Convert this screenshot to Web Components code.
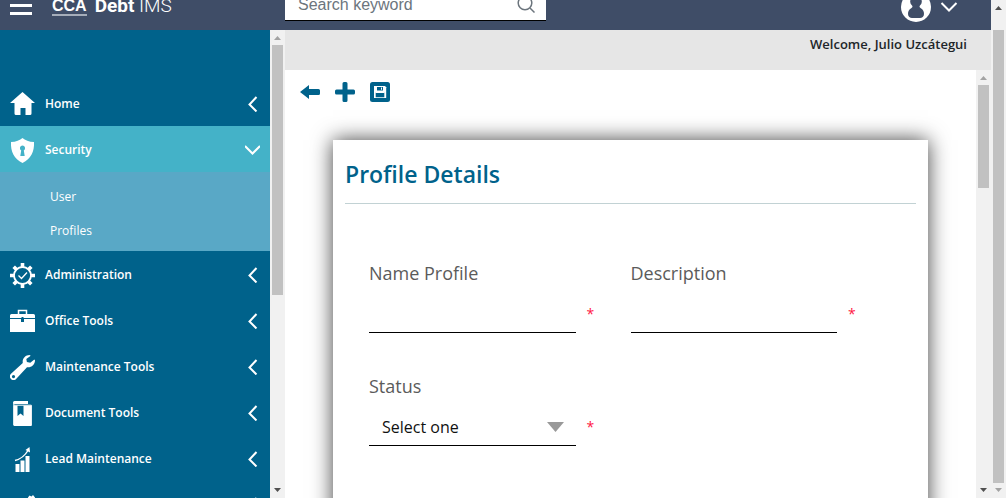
<!DOCTYPE html>
<html lang="en">
<head>
<meta charset="utf-8">
<title>Debt IMS</title>
<style>
  html, body { margin: 0; height: 100%; overflow: hidden; }
  body { font-family: "Open Sans", sans-serif; background: #fff; }
</style>
</head>
<body>
<ims-app></ims-app>
<script>
const ICONS = {
  home: '<path d="M12.500 0L25 11h-3.500v10.500a1.500 1.500 0 0 1-1.500 1.500h-4.500v-7h-5v7H6a1.500 1.500 0 0 1-1.500-1.500V11H0z"/>',
  shield: '<path fill-rule="evenodd" d="M12.500 0C15 2.300 19 4 24 4c.5 9.500-3 17-11.500 21C4 21 .5 13.500 1 4c5 0 9-1.700 11.500-4zM12.500 7.500a2.700 2.700 0 0 0-1.300 5l-.9 5.500h4.400l-.9-5.500a2.700 2.700 0 0 0-1.300-5z"/>',
  gear: '<g fill="none" stroke="#fff"><circle cx="12.500" cy="12.500" r="8.500" stroke-width="1.800"/><path d="M8.500 12.500l3 3 5.500-6" stroke-width="1.300"/><g stroke-width="3.600"><path d="M12.500 0v4M12.500 21v4M0 12.500h4M21 12.500h4M3.700 3.700l2.800 2.800M18.500 18.500l2.800 2.800M3.700 21.300l2.800-2.800M18.500 6.500l2.800-2.800"/></g></g>',
  briefcase: '<path d="M8.500 5V1.500h8V5" fill="none" stroke="#fff" stroke-width="1.500"/><path d="M1.500 5h22A1.500 1.500 0 0 1 25 6.500V9H0V6.500A1.500 1.500 0 0 1 1.500 5zM0 10h11v3h3v-3h11v13H0z"/><path d="M11.500 8h2v4h-2z" fill="#00628b"/>',
  wrench: '<path fill-rule="evenodd" d="M19.500 0c-4 0-7.500 3.500-6.700 8L1 18.800a3.600 3.600 0 0 0 5.100 5.100L17 12.300c4.500.5 8-2.800 8-7.100l-.7-.8-4 3.300-3.400-.6-.6-3.200L20.700.7zM3.500 20a1.600 1.600 0 1 1 0 3.200 1.600 1.600 0 0 1 0-3.200z"/>',
  book: '<path d="M4.500 0H18v3H4.500a1.500 1.500 0 0 1 0-3z"/><path d="M3.800 1.500v22.700h17.500V4.200H4" fill="none" stroke="#fff" stroke-width="1"/><path d="M3.500 4.500h4V15l3-2.500 3 2.500V4.500h8V25H5a1.500 1.500 0 0 1-1.500-1.500z"/>',
  chart: '<path d="M5.500 17h4v8h-4zM10.500 13.500h4V25h-4zM15.500 9h4v16h-4z"/><path d="M5 13.500C11 12 15 8.500 18 3.500" fill="none" stroke="#fff" stroke-width="1.400"/><path d="M19.500 0l.5 5.500-4.500-2.500z"/>',
  tools: '<path d="M18 4.500l1.500-2 2 1 1.500-1.500 2 2.500 0 7H17z"/><path d="M5 12l14 1v10H5z"/>'
};

const define = (name, html, setup) => {
  const template = document.createElement('template');
  template.innerHTML = html;
  customElements.define(name, class extends HTMLElement {
    constructor() {
      super();
      this.attachShadow({ mode: 'open' }).append(template.content.cloneNode(true));
    }
    connectedCallback() { if (setup) setup(this, this.shadowRoot); }
  });
};

/* Vertical scroll bar: --before is the space above the thumb, --thumb its length. */
define('ims-scrollbar', `
  <style>
    :host { display: grid; grid-template-rows: 15px 1fr 15px; width: 15px; background: #f1f1f1; }
    svg { width: 15px; height: 15px; display: block; }
    .track { display: grid; grid-template-rows: var(--before, 0%) var(--thumb, 50%); padding: 0 2px; min-height: 0; }
    i { grid-row: 2; background: #c1c1c1; }
    .up { fill: var(--up, #a3a3a3); }
    .down { fill: var(--down, #505050); }
  </style>
  <svg class="up" viewBox="0 0 15 15"><path d="M4 10l3.500-4 3.500 4z"/></svg>
  <div class="track"><i></i></div>
  <svg class="down" viewBox="0 0 15 15"><path d="M4 5l3.500 4L11 5z"/></svg>`);

define('ims-header', `
  <style>
    :host { display: flex; align-items: flex-end; height: 60px; margin-top: -30px; background: #3f4d67; color: #fff; box-sizing: border-box; }
    button { border: 0; background: none; padding: 0; display: block; }
    svg { display: block; }
    .side { width: 285px; box-sizing: border-box; padding: 0 0 14px 10px; display: flex; align-items: flex-end; flex: none; }
    .brand { display: flex; align-items: flex-end; margin-left: 20px; font: 300 19px/20px Roboto, sans-serif; color: #fff; text-decoration: none; }
    .brand b { font-weight: 700; }
    .mark { font: bold 16px/16px "Liberation Sans", sans-serif; border-bottom: 2px solid #a5adba; margin-right: 8px; }
    form { width: 261px; height: 41px; margin: 0 0 9px; display: flex; align-items: center; background: #fff; border-bottom: 1px solid #000; box-sizing: border-box; flex: none; }
    input { flex: 1; min-width: 0; border: 0; outline: 0; background: none; padding: 10px 0 0 13px; font: 16px/24px "Liberation Sans", sans-serif; }
    input::placeholder { color: #6c757d; opacity: 1; }
    form button { margin: 8px 11px 0 0; }
    .user { margin: 0 33px 8px auto; display: flex; align-items: center; gap: 9px; }
  </style>
  <div class="side">
    <button aria-label="Toggle menu"><svg width="22" height="20" viewBox="0 0 22 20" stroke="#fff" stroke-width="3"><path d="M0 1.500h22M0 9.500h22M0 17.500h22"/></svg></button>
    <a class="brand" href="#"><span class="mark">CCA</span><b>Debt</b>&nbsp;<span>IMS</span></a>
  </div>
  <form>
    <input type="search" placeholder="Search keyword" aria-label="Search keyword">
    <button type="button" aria-label="Search"><svg width="18" height="18" viewBox="0 0 18 18" fill="none" stroke="#6c757d" stroke-width="1.500"><circle cx="8" cy="8" r="6.800"/><path d="M13 13l4.500 4.500"/></svg></button>
  </form>
  <button class="user" aria-label="Account menu">
    <svg width="30" height="30" viewBox="0 0 30 30"><circle cx="15" cy="15" r="15" fill="#fff"/><path fill="#3f4d67" d="M15 4a5.500 5.500 0 0 1 4 9.500c-.8 1-.6 1.600.5 2.500 2.800 1.600 3.500 3.500 3.500 6 0 2.700-2 4-4 4h-8c-2 0-4-1.300-4-4 0-2.500.7-4.400 3.500-6 1.100-.9 1.300-1.500.5-2.500A5.500 5.500 0 0 1 15 4z"/></svg>
    <svg width="18" height="10" viewBox="0 0 18 10" fill="none" stroke="#fff" stroke-width="2"><path d="M1.500 1L9 8.500 16.500 1"/></svg>
  </button>`);

define('nav-item', `
  <style>
    :host { display: block; }
    .row { display: flex; align-items: center; height: 46px; padding: 2px 10px 0; color: #fff; text-decoration: none; font-weight: 600; font-size: 12px; line-height: 16px; box-sizing: border-box; }
    svg { display: block; flex: none; fill: #fff; }
    span { flex: 1; margin-left: 10px; }
    .chev { fill: none; stroke: #fff; stroke-width: 2; }
    .open { display: none; }
    :host([open]) .row { background: #44b2c8; }
    :host([open]) .open { display: block; }
    :host([open]) .shut { display: none; }
    .sub { display: none; }
    :host([open]) .sub { display: flex; flex-direction: column; background: #59a8c6; padding: 8px 0 3px; }
  </style>
  <a class="row" href="#"><svg class="icon" width="25" height="25" viewBox="0 0 25 25"></svg><span></span>
    <svg class="chev shut" width="15" height="16" viewBox="0 0 15 16"><path d="M11.500 1L4.500 8.500l7 7"/></svg>
    <svg class="chev open" width="15" height="10" viewBox="0 0 15 10"><path d="M0 1l7.500 7.500L15 1"/></svg>
  </a>
  <div class="sub"><slot></slot></div>`,
  (el, root) => {
    root.querySelector('.icon').innerHTML = ICONS[el.getAttribute('icon')];
    root.querySelector('span').textContent = el.getAttribute('label');
  });

define('nav-link', `
  <style>
    :host { display: block; }
    a { display: block; padding: 0 50px; color: #fff; font-size: 12px; line-height: 34px; text-decoration: none; }
  </style>
  <a href="#"><slot></slot></a>`);

define('ims-sidebar', `
  <style>
    :host { display: flex; background: #00628b; min-height: 0; overflow: hidden; }
    nav { flex: 1; padding-top: 50px; overflow: hidden; }
    ims-scrollbar { --thumb: 57%; }
  </style>
  <nav>
    <nav-item icon="home" label="Home"></nav-item>
    <nav-item icon="shield" label="Security" open><nav-link>User</nav-link><nav-link>Profiles</nav-link></nav-item>
    <nav-item icon="gear" label="Administration"></nav-item>
    <nav-item icon="briefcase" label="Office Tools"></nav-item>
    <nav-item icon="wrench" label="Maintenance Tools"></nav-item>
    <nav-item icon="book" label="Document Tools"></nav-item>
    <nav-item icon="chart" label="Lead Maintenance"></nav-item>
    <nav-item icon="tools" label=""></nav-item>
  </nav>
  <ims-scrollbar></ims-scrollbar>`);

define('form-field', `
  <style>
    :host { display: block; }
    label { display: block; font-size: 18px; line-height: 24px; color: #5b5b5b; margin-bottom: 12px; }
    .line { display: flex; align-items: center; gap: 11px; }
    .box { position: relative; width: 79%; }
    input, select { display: block; width: 100%; height: 36px; box-sizing: border-box; border: 0; border-bottom: 1px solid #000; border-radius: 0; background: none; outline: 0; padding: 0 13px 2px; font: 16px/24px "Open Sans", sans-serif; color: #111; appearance: none; }
    .box svg { position: absolute; right: 12px; top: 12px; pointer-events: none; }
    .star { color: #ff1744; font-size: 14px; line-height: 24px; padding-bottom: 2px; }
  </style>
  <label for="control"></label>
  <div class="line"><div class="box"></div><span class="star">*</span></div>`,
  (el, root) => {
    root.querySelector('label').textContent = el.getAttribute('label');
    root.querySelector('.box').innerHTML = el.hasAttribute('options')
      ? '<select id="control">' + el.getAttribute('options').split(',').map(o => '<option>' + o + '</option>').join('') +
        '</select><svg width="17" height="10" viewBox="0 0 17 10" fill="#999"><path d="M0 0h17L8.500 10z"/></svg>'
      : '<input id="control" type="text">';
  });

define('detail-card', `
  <style>
    :host { display: block; padding: 12px; background: #fff; box-shadow: 0 0 20px rgba(0,0,0,.75); box-sizing: border-box; }
    h2 { margin: 0; padding-bottom: 7px; border-bottom: 1px solid #c2d2d4; font-size: 23px; line-height: 44px; font-weight: 600; color: #00628b; }
    .fields { display: grid; grid-template-columns: 1fr 1fr; row-gap: 41px; padding: 57px 24px 80px; }
  </style>
  <h2><slot name="title"></slot></h2>
  <div class="fields"><slot></slot></div>`);

define('tool-bar', `
  <style>
    :host { display: flex; gap: 15px; padding: 12px 15px; }
    button { border: 0; padding: 0; background: none; display: block; }
    svg { display: block; width: 20px; height: 20px; fill: #00628b; }
  </style>
  <button aria-label="Back"><svg viewBox="0 0 20 20"><path d="M0 10l9-7v4h9.500a1.500 1.500 0 0 1 1.500 1.500v3a1.500 1.500 0 0 1-1.500 1.500H9v4z"/></svg></button>
  <button aria-label="Add"><svg viewBox="0 0 20 20"><path d="M7.500 1.500A1.500 1.500 0 0 1 9 0h2a1.500 1.500 0 0 1 1.500 1.500v6h6A1.500 1.500 0 0 1 20 9v2a1.500 1.500 0 0 1-1.500 1.500h-6v6A1.500 1.500 0 0 1 11 20H9a1.500 1.500 0 0 1-1.500-1.500v-6h-6A1.500 1.500 0 0 1 0 11V9a1.500 1.500 0 0 1 1.500-1.500h6z"/></svg></button>
  <button aria-label="Save"><svg viewBox="0 0 20 20"><rect width="20" height="20" rx="2.500"/><path fill="#fff" d="M4 4h11l1.200 1.200V16H4z"/><path d="M7 5h6v3.500H7zM5.700 10.500h8.600v4.700H5.700z"/><path fill="#fff" d="M11 5.500h1v2.300h-1zM5.700 10h8.600v1H5.700z"/></svg></button>`);

define('ims-content', `
  <style>
    :host { display: grid; grid-template-rows: 40px 1fr; min-height: 0; overflow: hidden; background: #fff; }
    .welcome { background: #e6e6e6; text-align: right; padding: 0 24px; font-size: 13px; font-weight: 600; line-height: 28px; color: #212529; }
    .pane { display: grid; grid-template-columns: 1fr 15px; min-height: 0; }
    main { overflow: hidden; min-height: 0; }
    detail-card { margin: 26px 48px 40px; }
    ims-scrollbar { --thumb: 26%; }
  </style>
  <div class="welcome">Welcome, Julio Uzcátegui</div>
  <div class="pane">
    <main>
      <tool-bar></tool-bar>
      <detail-card>
        <span slot="title">Profile Details</span>
        <form-field label="Name Profile"></form-field>
        <form-field label="Description"></form-field>
        <form-field label="Status" options="Select one,Active,Inactive"></form-field>
      </detail-card>
    </main>
    <ims-scrollbar></ims-scrollbar>
  </div>`);

define('ims-app', `
  <style>
    :host { display: grid; grid-template-columns: 1fr 15px; height: 100vh; overflow: hidden; }
    .page { display: grid; grid-template-rows: auto 1fr; min-height: 0; }
    .body { display: grid; grid-template-columns: 285px 1fr; min-height: 0; }
    .outer { --before: 15px; --thumb: calc(100% - 15px); --up: #505050; --down: #a3a3a3; }
  </style>
  <div class="page">
    <ims-header></ims-header>
    <div class="body"><ims-sidebar></ims-sidebar><ims-content></ims-content></div>
  </div>
  <ims-scrollbar class="outer"></ims-scrollbar>`);
</script>
</body>
</html>
